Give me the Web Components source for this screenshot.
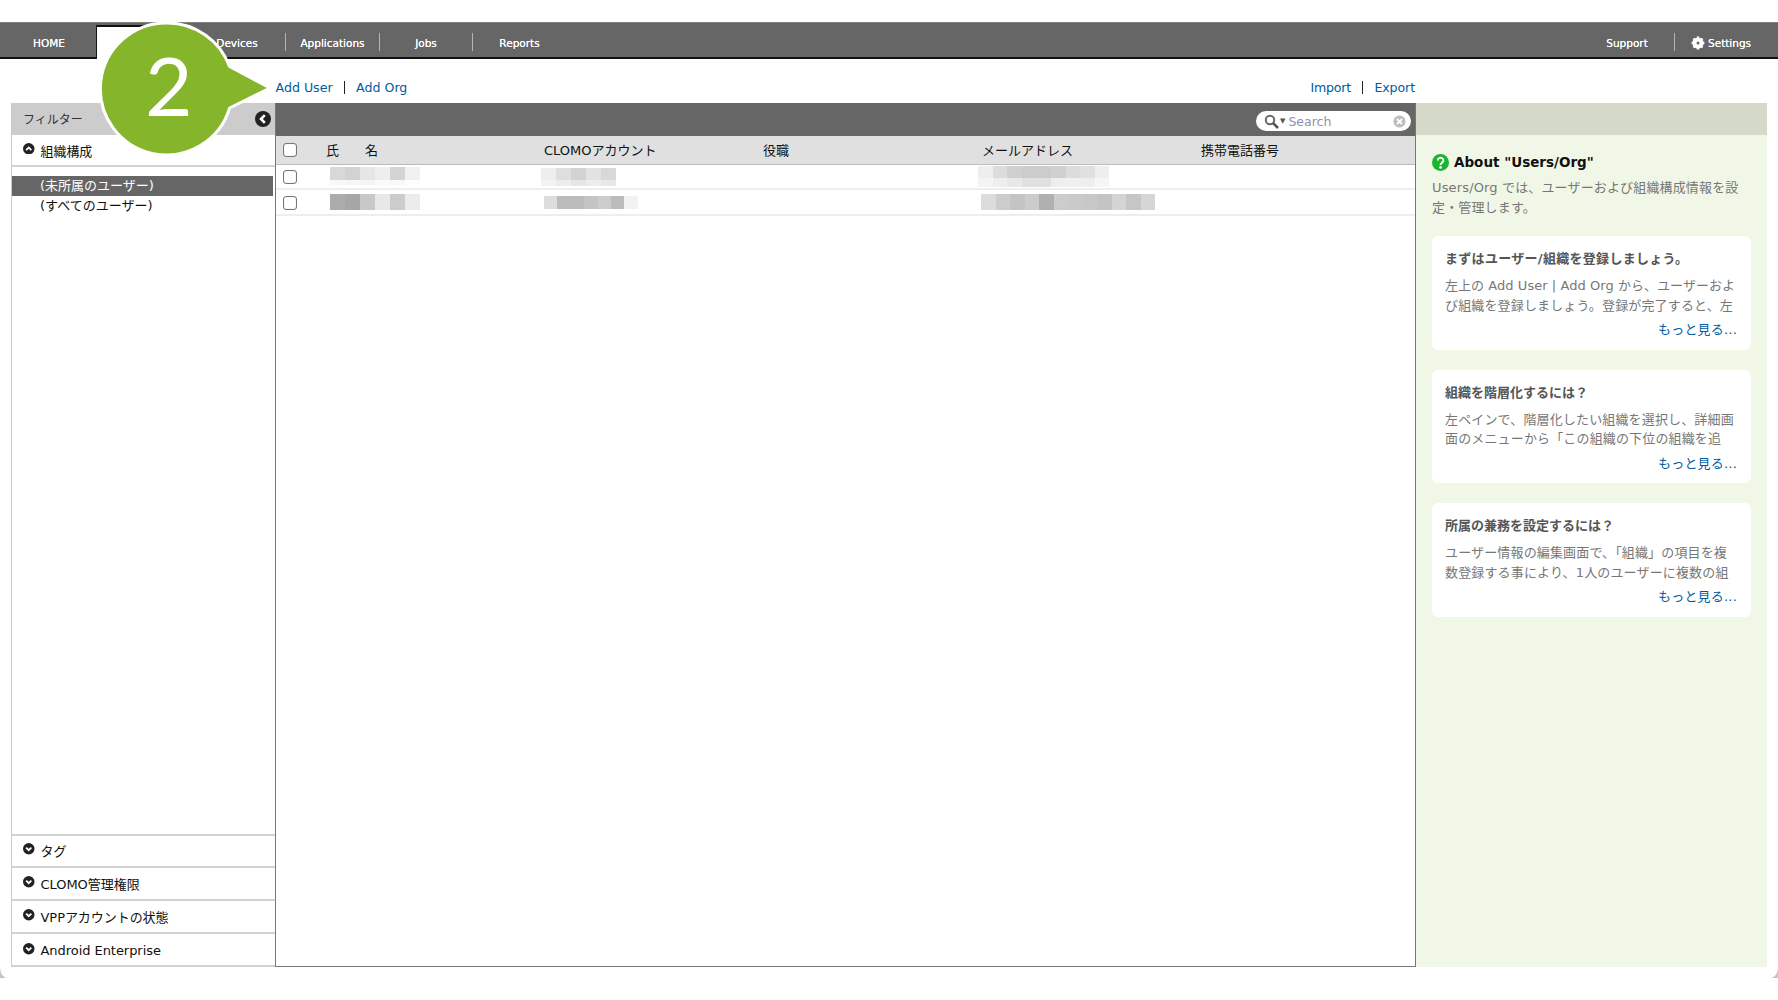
<!DOCTYPE html>
<html lang="ja"><head><meta charset="utf-8"><title>Users/Org</title>
<style>
html,body{margin:0;padding:0;background:#fff}
body{font-family:"DejaVu Sans","Noto Sans CJK JP",sans-serif;font-size:13px;color:#222;width:1778px;height:1000px;overflow:hidden}
</style></head><body>
<app-shell>
  <top-nav></top-nav>
  <action-bar></action-bar>
  <div slot="main" style="display:flex;height:864px;padding-right:11px;padding-left:11px">
    <filter-panel></filter-panel>
    <user-table></user-table>
    <help-panel>
      <help-card title-spacing=".3px" title-text="まずはユーザー/組織を登録しましょう。"><span style="letter-spacing:.05px">左上の Add User | Add Org から、ユーザーおよ</span><br>び組織を登録しましょう。登録が完了すると、左</help-card>
      <help-card title-text="組織を階層化するには？">左ペインで、階層化したい組織を選択し、詳細画<br>面のメニューから「この組織の下位の組織を追</help-card>
      <help-card title-text="所属の兼務を設定するには？">ユーザー情報の編集画面で、「組織」の項目を複<br>数登録する事により、1人のユーザーに複数の組</help-card>
    </help-panel>
  </div>
  <callout-badge slot="over"></callout-badge>
</app-shell>
<script>
const def=(name,html,extra)=>{customElements.define(name,class extends HTMLElement{
  constructor(){super();this.attachShadow({mode:'open'}).innerHTML=html;}
  connectedCallback(){extra&&extra.call(this,this.shadowRoot)}
})};
const chev=(dir)=>{const p={up:'M4.4 9.8 8 6.2l3.6 3.6',down:'M4.4 6.4 8 10l3.6-3.6',left:'M9.8 4.2 6 8l3.8 3.8'}[dir];
 return `<svg width="16" height="16" viewBox="0 0 16 16"><circle cx="8" cy="8" r="8" fill="#222"/><path d="${p}" fill="none" stroke="#fff" stroke-width="2.6"/></svg>`};

def('app-shell',`<style>:host{display:block;position:relative;width:1778px;height:1000px;padding-top:22px;box-sizing:border-box}
.c{position:absolute;top:966px;width:7px;height:12px}.l{left:0}.r{right:0}</style>
<slot></slot><slot name="main"></slot><slot name="over"></slot>
<svg class="c l" viewBox="0 0 7 12"><path d="M0 0C0 6 2 11 7 12L0 12Z" fill="#c4c4c4"/></svg>
<svg class="c r" viewBox="0 0 7 12"><path d="M7 0C7 6 5 11 0 12L7 12Z" fill="#c4c4c4"/></svg>`);

def('top-nav',`<style>:host{display:flex;height:37px;box-sizing:border-box;background:#666;border-top:1px solid #808080;border-bottom:2px solid #111;color:#fff;font-size:10.5px;font-weight:400;align-items:stretch;text-shadow:0 0 .6px #fff}
.t{display:flex;align-items:center;justify-content:center;padding-top:5px}
.s{width:1px;height:18px;background:#b5b5b5;align-self:center;margin-top:3px}
.a{width:93px;background:#fff;border:solid #111;border-width:2px 1px 0 1px;box-sizing:border-box;margin-top:2px;margin-bottom:-2px}
.g{margin-left:auto}
svg{margin-right:3px}</style>
<div class="t" style="width:96px;padding-left:2px;box-sizing:border-box">HOME</div><div class="a"></div>
<div class="t" style="width:96px">Devices</div><div class="s"></div>
<div class="t" style="width:93px">Applications</div><div class="s"></div>
<div class="t" style="width:92px">Jobs</div><div class="s"></div>
<div class="t" style="width:93px">Reports</div>
<div class="t g" style="width:94px">Support</div><div class="s"></div>
<div class="t" style="width:103px;justify-content:flex-start;padding-left:16px;box-sizing:border-box"><svg width="14" height="14" viewBox="0 0 14 14"><circle cx="7" cy="7" r="5.6" fill="#fff"/><path d="M7 .6v12.8M.6 7h12.8M2.5 2.5l9 9M11.5 2.5l-9 9" stroke="#fff" stroke-width="2.4"/><circle cx="7" cy="7" r="1.5" fill="#666"/></svg>Settings</div>`);

def('action-bar',`<style>:host{display:flex;height:44px;box-sizing:border-box;padding:12px 363px 0 275.5px;align-items:center;font-size:12.6px}
a{color:#005b9f;text-decoration:none}i{display:inline-block;width:1.5px;height:13px;background:#222;margin:0 11px}
.r{margin-left:auto}.im{letter-spacing:-.25px}</style>
<a>Add User</a><i></i><a>Add Org</a><a class="r im">Import</a><i></i><a style="letter-spacing:-.1px">Export</a>`);

def('filter-section',`<style>:host{display:flex;align-items:center;height:33px;box-sizing:border-box;border-bottom:2px solid #d2d2d2;font-size:13px;letter-spacing:-.05px;color:#111;padding-left:11px}
#i{display:flex;margin-right:6px;margin-top:-3px;flex:none}
svg{width:11.5px;height:11.5px}</style><span id="i"></span><slot></slot>`,
function(r){r.getElementById('i').innerHTML=chev(this.getAttribute('dir')||'down')});

def('filter-panel',`<style>:host{display:flex;flex-direction:column;width:264px;box-sizing:border-box;border-left:1px solid #ccc;height:100%}
.h{height:32px;flex:none;background:#ccc;display:flex;align-items:center;justify-content:space-between;padding:0 4px 0 11px;font-size:12px;color:#333}
.h span{margin-top:-2px}
.h svg{width:16px;height:16px}
.tree{flex:1;padding-top:9px;font-size:13px;color:#111}
.n{height:20px;line-height:20px;padding-left:28px}
.sel{background:#666;color:#fff;margin:0 2px 0 0}
filter-section.top{height:32px}
.tg{border-top:2px solid #d2d2d2;height:33px;padding-bottom:1px}
.an{padding-top:2px}</style>
<div class="h"><span>フィルター</span>${chev('left')}</div>
<filter-section dir="up" class="top">組織構成</filter-section>
<div class="tree"><div class="n sel">(未所属のユーザー)</div><div class="n">(すべてのユーザー)</div></div>
<filter-section class="tg" style="height:34px">タグ</filter-section>
<filter-section>CLOMO管理権限</filter-section>
<filter-section>VPPアカウントの状態</filter-section>
<filter-section class="an">Android Enterprise</filter-section>`);

def('blur-cells',`<style>:host{display:block}.r{display:flex}.r span{display:block;flex:none}</style><div id="w"></div>`,
function(r){
  const rows=this.getAttribute('rows').split('/');
  const w=+this.getAttribute('cw')||15;
  r.getElementById('w').innerHTML=rows.map(s=>{const [h,cs]=s.split(':');
    return `<div class="r" style="height:${h}px">`+cs.split(',').map(c=>`<span style="width:${w}px;background:#${c}"></span>`).join('')+'</div>'}).join('');
});

def('check-box',`<style>:host{display:block;width:14px;height:14px;box-sizing:border-box;border:1px solid #777;border-radius:3px;background:#fff;box-shadow:inset 0 0 1px #aaa}</style>`);

def('user-table',`<style>:host{display:flex;flex-direction:column;width:1141px;box-sizing:border-box;border:solid #777;border-width:0 1px 1px 1px;height:100%;background:#fff}
.bar{height:33px;flex:none;background:#666;display:flex;justify-content:flex-end;align-items:center;padding-right:4px;box-sizing:border-box;padding-top:3px}
.s{width:155px;height:20px;background:#fff;border-radius:10px;display:flex;align-items:center;padding-left:8px;box-sizing:border-box;color:#8b93a8;font-size:12.5px;position:relative}
.s b{font-weight:400;font-size:7px;margin:0 3px 0 1px;color:#555}
.s .x{margin-left:auto;margin-right:5px}
.row{display:grid;grid-template-columns:50px 218px 219px 219px 219px 1fr;align-items:center;box-sizing:border-box}
.hd{height:29px;background:#e0e0e0;border-bottom:1px solid #bcbcbc;font-size:13px;color:#111;padding-bottom:1px}
.rw{height:26px;border-bottom:2px solid #eee}
.rw.f{height:25px}
check-box{margin-left:7px}
.rw check-box{margin-top:1px}
.nm span{display:inline-block;width:39px}</style>
<div class="bar"><div class="s"><svg width="15" height="15" viewBox="0 0 15 15"><circle cx="6" cy="6" r="4.2" fill="#fff" stroke="#666" stroke-width="2"/><path d="M9.2 9.2 14 14" stroke="#555" stroke-width="2.6"/></svg><b>▼</b>Search<svg class="x" width="13" height="13" viewBox="0 0 13 13"><circle cx="6.5" cy="6.5" r="6" fill="#bdbdbd"/><path d="M4 4l5 5M9 4l-5 5" stroke="#fff" stroke-width="1.8"/></svg></div></div>
<div class="row hd"><check-box></check-box><div class="nm"><span>氏</span>名</div><div>CLOMOアカウント</div><div>役職</div><div>メールアドレス</div><div>携帯電話番号</div></div>
<div class="row rw f"><check-box></check-box>
 <div><blur-cells style="margin:-1px 0 0 4px" rows="13:d8d8d8,d2d2d2,e6e6e6,eeeeee,d4d4d4,f0f0f0/5:f8f8f8,f6f6f6,f4f4f4,fafafa,f8f8f8,fcfcfc"></blur-cells></div>
 <div><blur-cells style="margin:0 0 0 -3px" rows="12:eeeeee,dedede,d2d2d2,e2e2e2,d8d8d8/6:f2f2f2,ececec,e6e6e6,ececec,e8e8e8"></blur-cells></div><div></div>
 <div><blur-cells style="margin:-1px 0 0 -4px" cw="14.6" rows="12:eeeeee,dcdcdc,cfcfcf,cccccc,cccccc,d0d0d0,dcdcdc,e0e0e0,eeeeee/9:f4f4f4,eeeeee,e8e8e8,e0e0e0,e0e0e0,eeeeee,f0f0f0,eeeeee,f6f6f6"></blur-cells></div><div></div></div>
<div class="row rw"><check-box></check-box>
 <div><blur-cells style="margin:0 0 0 4px" rows="16:acacac,a6a6a6,c8c8c8,e8e8e8,cccccc,ececec"></blur-cells></div>
 <div><blur-cells style="margin:1px 0 0 0" cw="13.4" rows="13:dddddd,bcbcbc,bcbcbc,c4c4c4,cccccc,bcbcbc,f2f2f2"></blur-cells></div><div></div>
 <div><blur-cells style="margin:-1px 0 0 -1px" cw="14.5" rows="16:dcdcdc,cccccc,c4c4c4,cccccc,b0b0b0,cccccc,cacaca,c8c8c8,c4c4c4,d4d4d4,c6c6c6,d6d6d6"></blur-cells></div><div></div></div>`);

def('help-panel',`<style>:host{display:flex;flex-direction:column;width:351px;box-sizing:border-box;background:#f1f7e6;height:100%;color:#777}
.h{height:32px;flex:none;background:#d5d9c8}
.b{padding:17px 16px 0 16px}
h2{margin:0;font-size:13.5px;line-height:20px;color:#111;font-weight:700;display:flex;align-items:center;gap:5px}
p{margin:6px 0 19px;font-size:13px;line-height:19.5px;letter-spacing:.15px;white-space:nowrap}
::slotted(help-card){margin-bottom:20px}</style>
<div class="h"></div><div class="b"><h2><svg width="17" height="17" viewBox="0 0 17 17"><circle cx="8.5" cy="8.5" r="8.5" fill="#18b52e"/><path d="M5.8 6.4a2.8 2.6 0 1 1 4.3 2.2c-1.1.7-1.6 1.2-1.6 2.4" fill="none" stroke="#fff" stroke-width="2"/><circle cx="8.5" cy="13.4" r="1.3" fill="#fff"/></svg>About "Users/Org"</h2>
<p>Users/Org では、ユーザーおよび組織構成情報を設<br>定・管理します。</p><slot></slot></div>`);

def('help-card',`<style>:host{display:block;height:113.5px;box-sizing:border-box;background:#fff;border-radius:6px;padding:13px 13px 0 13px;color:#777;font-size:13px;white-space:nowrap}
h3{margin:0 0 7px;font-size:13px;line-height:20px;color:#555;font-weight:700}
.t{line-height:19.7px;height:40px;overflow:hidden;letter-spacing:.15px}
a{display:block;text-align:right;color:#005b9f;margin-top:4px;line-height:20px;letter-spacing:.2px;padding-right:1px}</style>
<h3 id="h"></h3><div class="t"><slot></slot></div><a>もっと見る...</a>`,
function(r){const h=r.getElementById('h');h.textContent=this.getAttribute('title-text');h.style.letterSpacing=this.getAttribute('title-spacing')||'0'});

def('callout-badge',`<style>:host{display:block;position:absolute;left:96px;top:17px;width:180px;height:144px}
svg{position:absolute;left:0;top:0}
span{position:absolute;left:49px;top:23px;font:400 82px/88px Lato,sans-serif;color:#fff;width:44px;text-align:center}</style>
<svg width="180" height="144" viewBox="0 0 180 144"><path d="M71.5 6a66 66 0 0 1 62 43.5L174 71l-40.4 20A66 66 0 1 1 71.5 6Z" fill="#84b52a" stroke="#fff" stroke-width="3" stroke-linejoin="round"/></svg><span>2</span>`);
</script>
</body></html>
